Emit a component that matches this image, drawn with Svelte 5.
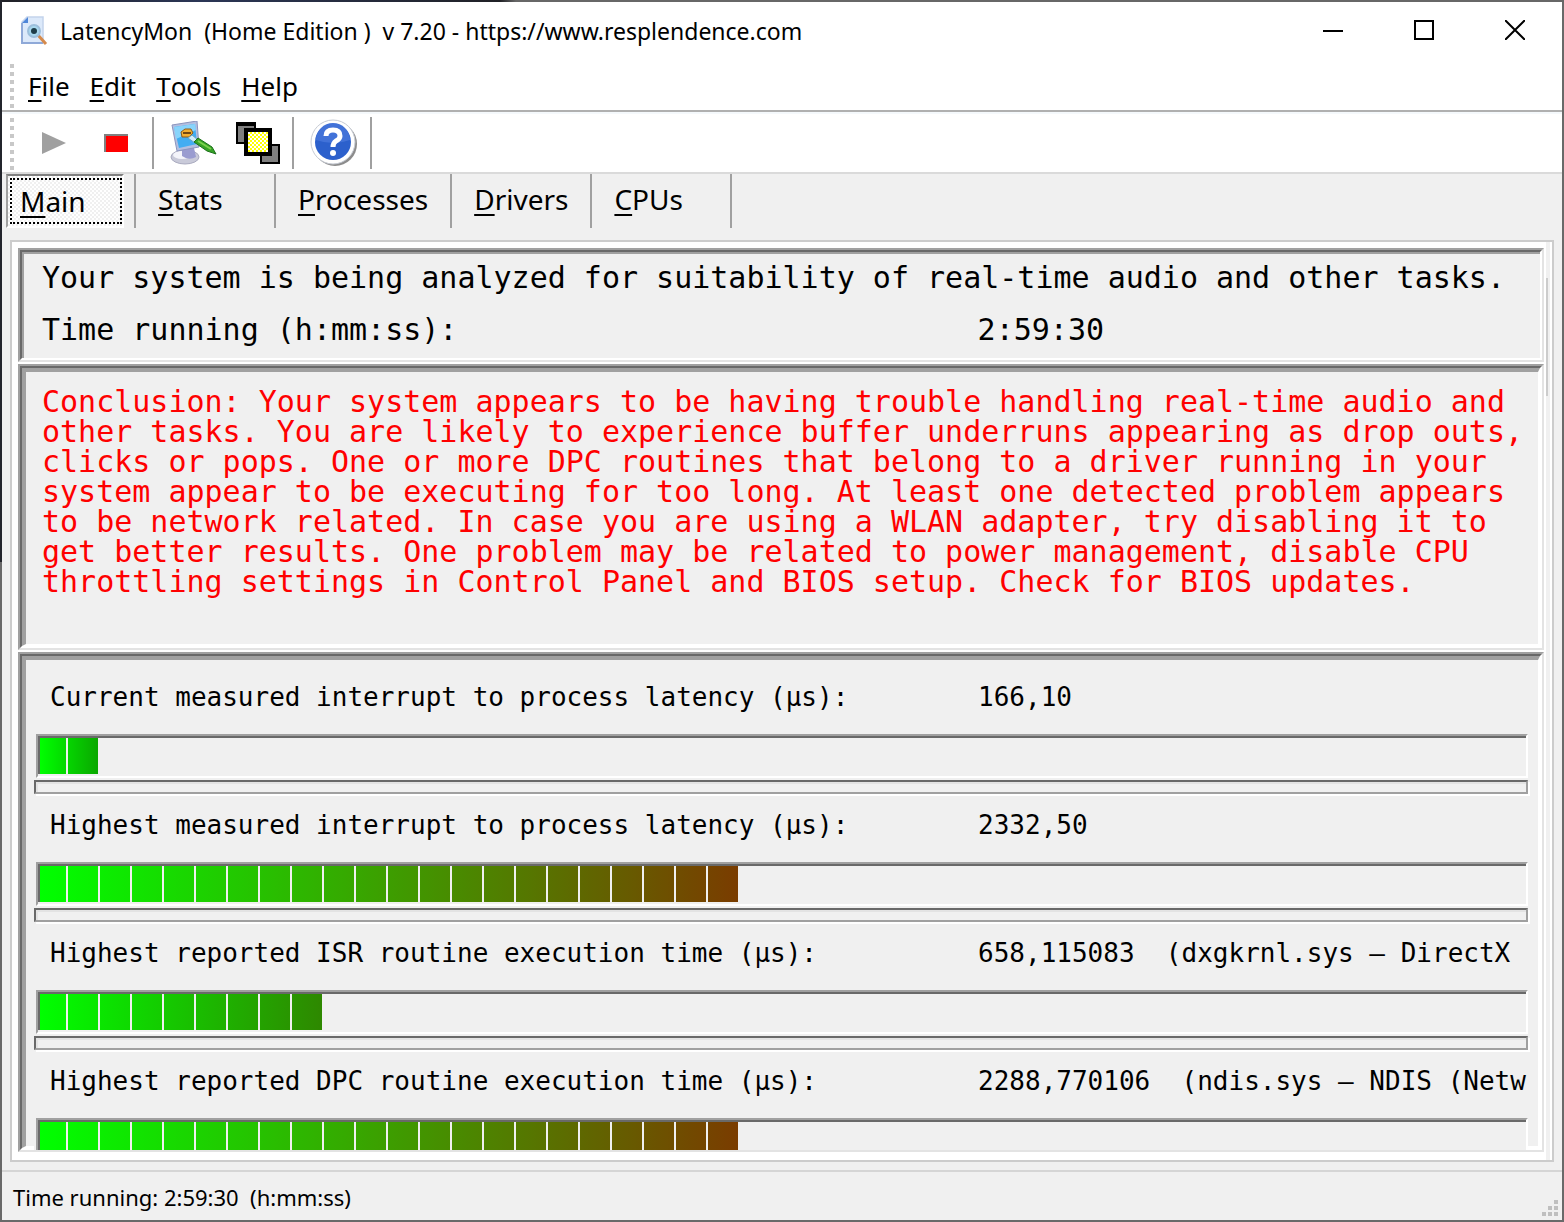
<script>
  const menus = ['File', 'Edit', 'Tools', 'Help'];
  const tabs = ['Main', 'Stats', 'Processes', 'Drivers', 'CPUs'];
  const metrics = [
    { label: 'Current measured interrupt to process latency (µs):', value: '166,10', steps: 2, end: '#0aa800' },
    { label: 'Highest measured interrupt to process latency (µs):', value: '2332,50', steps: 22, end: '#7a3c00' },
    { label: 'Highest reported ISR routine execution time (µs):', value: '658,115083  (dxgkrnl.sys – DirectX', steps: 9, end: '#2e8800' },
    { label: 'Highest reported DPC routine execution time (µs):', value: '2288,770106  (ndis.sys – NDIS (Netw', steps: 22, end: '#7a3c00' }
  ];
  let active = $state('Main');
</script>

<div class="window">
  <div class="frame">
    <header class="title">
      <svg class="appicon" viewBox="0 0 28 32" aria-hidden="true">
        <path d="M7 2H23V28H2V7Z" fill="#dce9fa" stroke="#c3d3ec" stroke-width="1.5" />
        <path d="M2 8L8 2V8Z" fill="#4f86d8" />
        <path d="M2 8V28H23" fill="none" stroke="#8fa9d8" stroke-width="2" />
        <path d="M17 19L26 29" stroke="#d58a4c" stroke-width="3" />
        <circle cx="14" cy="16" r="6" fill="#a8d8ee" stroke="#9dbfdc" stroke-width="2" />
        <circle cx="14" cy="16" r="3" fill="#1f3d4a" />
      </svg>
      <h1>LatencyMon&nbsp; (Home Edition )&nbsp; v 7.20 - https://www.resplendence.com</h1>
      <div class="controls">
        <button aria-label="Minimize"><svg viewBox="0 0 20 20"><path d="M0 11H20" /></svg></button>
        <button aria-label="Maximize"><svg viewBox="0 0 20 20"><path d="M1 1H19V19H1Z" /></svg></button>
        <button aria-label="Close"><svg viewBox="0 0 20 20"><path d="M0 0L20 20M20 0L0 20" /></svg></button>
      </div>
    </header>

    <nav class="menu">
      {#each menus as m}
        <button><u>{m[0]}</u>{m.slice(1)}</button>
      {/each}
    </nav>

    <div class="toolbar">
      <button aria-label="Start" class="play"><svg width="24" height="22" viewBox="0 0 24 22"><path d="M0 0L24 11L0 22Z" fill="#a0a0a0" /></svg></button>
      <button aria-label="Stop" class="stop"><svg width="24" height="18" viewBox="0 0 24 18"><path d="M0 0H24V18H0Z" fill="#808080" /><path d="M2 2H24V18H2Z" fill="#f00" /></svg></button>
      <span class="sep"></span>
      <button aria-label="Options" class="monitor">
        <svg width="48" height="44" viewBox="0 0 48 44">
          <ellipse cx="15" cy="36" rx="14" ry="7" fill="#c9cad9" stroke="#a9aabf" />
          <ellipse cx="12" cy="34" rx="9" ry="4" fill="#f4f4fa" />
          <path d="M12 27L24 27L26 36Q19 40 12 35Z" fill="#9a9cd0" />
          <path d="M2 4L27 0L29 26L7 30Z" fill="#b3bfe0" stroke="#8b94bd" />
          <path d="M4 6L25 3L27 23L9 27Z" fill="#42adf2" />
          <path d="M4 6L25 3L26 9L6 18Z" fill="#88d4fb" />
          <path d="M11 11L15 8H21L23 12L19 16H12Z" fill="#f1ae32" stroke="#8a5a1c" />
          <path d="M13 12H21" stroke="#704714" stroke-width="2" />
          <path d="M18 17L22 14L28 19L25 22Z" fill="#d3edf8" stroke="#6ba6c4" />
          <path d="M24 21L28 17L42 26L46 33L37 30Z" fill="#36a326" stroke="#1d701b" />
          <path d="M28 20L41 28" stroke="#7cd04e" stroke-width="2" />
        </svg>
      </button>
      <button aria-label="Windows" class="layers">
        <svg width="44" height="42" viewBox="0 0 44 42" shape-rendering="crispEdges">
          <path d="M1 1H19V21H1ZM25 23H43V41H25Z" fill="#808080" stroke="#000" stroke-width="2" />
          <path d="M0 0H20V4H0Z" fill="#000" />
          <path d="M10 8H34V32H10Z" fill="#ff0" />
          {#each Array(25) as _, i}
            <path d="M{12 + (i % 5) * 4} {10 + Math.floor(i / 5) * 4}h2v2h-2zM{14 + (i % 5) * 4} {12 + Math.floor(i / 5) * 4}h2v2h-2z" fill="#fff" />
          {/each}
          <path d="M10 8H34V32H10Z" fill="none" stroke="#000" stroke-width="4" />
        </svg>
      </button>
      <span class="sep"></span>
      <button aria-label="Help" class="help">
        <svg width="48" height="48" viewBox="0 0 48 48">
          <circle cx="25" cy="25" r="22" fill="#8c8c8c" />
          <circle cx="23" cy="23" r="22" fill="#fff" stroke="#c6cbd4" />
          <circle cx="23" cy="23" r="18" fill="#2c60cc" />
          <path d="M6 21A17 17 0 0 1 40 21Q23 27 6 21Z" fill="#4272d8" />
          <path d="M16 17Q16 11 23 11Q30 11 30 17Q30 20 26 22Q23 24 23 28" fill="none" stroke="#fff" stroke-width="5" />
          <circle cx="23" cy="34" r="3" fill="#fff" />
        </svg>
      </button>
      <span class="sep"></span>
    </div>

    <div class="tabs" role="tablist">
      {#each tabs as t}
        <button role="tab" aria-selected={active === t} class:active={active === t} onclick={() => (active = t)}><u>{t[0]}</u>{t.slice(1)}</button>
      {/each}
    </div>

    <main>
      <div class="page">
        <section class="panel summary">
          <p>Your system is being analyzed for suitability of real-time audio and other tasks.</p>
          <p class="pair"><span>Time running (h:mm:ss):</span><span>2:59:30</span></p>
        </section>

        <section class="panel deep conclusion">
          <p>Conclusion: Your system appears to be having trouble handling real-time audio and other tasks. You are likely to experience buffer underruns appearing as drop outs, clicks or pops. One or more DPC routines that belong to a driver running in your system appear to be executing for too long. At least one detected problem appears to be network related. In case you are using a WLAN adapter, try disabling it to get better results. One problem may be related to power management, disable CPU throttling settings in Control Panel and BIOS setup. Check for BIOS updates.</p>
        </section>

        <section class="panel deep metrics">
          {#each metrics as m}
            <div class="metric">
              <p class="pair"><span>{m.label}</span><span>{m.value}</span></p>
              <div class="bar" role="meter" aria-label={m.label} aria-valuemin="0" aria-valuemax="46" aria-valuenow={m.steps}>
                <div class="fill" style="width: {m.steps * 32 - 6}px; --end: {m.end}"></div>
              </div>
              <div class="slot"></div>
            </div>
          {/each}
        </section>
      </div>
    </main>

    <footer>
      <span>Time running: 2:59:30&nbsp; (h:mm:ss)</span>
      <svg width="16" height="16" viewBox="0 0 16 16" aria-hidden="true" shape-rendering="crispEdges">
        <path d="M12 0h4v4h-4zM6 6h4v4h-4zM12 6h4v4h-4zM0 12h4v4h-4zM6 12h4v4h-4zM12 12h4v4h-4z" fill="#bfbfbf" />
      </svg>
    </footer>
  </div>
</div>

<style>
  :global(body) { margin: 0; }
  * { box-sizing: border-box; }
  .window {
    height: 100vh;
    padding: 2px;
    font-family: "Noto Sans", "Open Sans", sans-serif;
    color: #000;
    background:
      linear-gradient(#23252c, #23252c) 0 0 / 2px 46% no-repeat,
      linear-gradient(90deg, #202126, #2b3656 200px, #202126 500px, #676767 516px) 0 0 / 100% 2px no-repeat,
      #696969;
  }
  .frame { height: 100%; display: flex; flex-direction: column; background: #f0f0f0; overflow: hidden; }
  button { border: 0; padding: 0; margin: 0; background: none; color: inherit; font: inherit; display: flex; align-items: center; }
  h1, p { margin: 0; font-weight: 400; }
  u { text-decoration-thickness: 2px; text-underline-offset: 4px; text-decoration-skip-ink: none; }

  .title { height: 58px; flex: none; display: flex; align-items: center; padding: 0 2px 0 18px; background: #fff; }
  .appicon { width: 28px; height: 32px; margin-right: 12px; }
  .title h1 { font-size: 23px; flex: 1; white-space: nowrap; }
  .controls { display: flex; height: 100%; }
  .controls button { width: 91px; padding-bottom: 2px; justify-content: center; }
  .controls svg { width: 20px; height: 20px; fill: none; stroke: #000; stroke-width: 2; }

  .menu, .toolbar { position: relative; flex: none; display: flex; background: #fff; }
  .menu::before, .toolbar::before {
    content: ""; position: absolute; left: 8px; top: 4px; bottom: 0; width: 4px;
    background: repeating-linear-gradient(#c8c8c8 0 4px, transparent 4px 8px);
  }
  .menu { height: 52px; padding-left: 26px; padding-top: 2px; gap: 20px; border-bottom: 2px solid #b0b0b0; font-size: 26px; }
  .toolbar { height: 62px; align-items: center; border-bottom: 2px solid #dadada; border-top: 2px solid #f5f9fc; }
  .toolbar .sep { width: 2px; height: 52px; background: #a0a0a0; }
  .play { margin-left: 40px; }
  .stop { margin-left: 38px; margin-right: 24px; }
  .monitor { margin-left: 16px; }
  .layers { margin-left: 18px; margin-right: 12px; }
  .help { margin-left: 16px; margin-right: 12px; }

  .tabs { flex: none; display: flex; height: 54px; font-size: 28px; }
  .tabs button { min-width: 140px; height: 54px; padding: 0 22px 4px 22px; border-right: 2px solid #a0a0a0; }
  .tabs button:first-child { min-width: 134px; padding-left: 18px; }
  .tabs .active { position: relative; z-index: 0; padding-bottom: 0; }
  .tabs .active::before {
    content: ""; position: absolute; z-index: -1; inset: 0 10px 0 4px;
    border: 2px solid; border-color: #808080 #fff #fff #a0a0a0;
    background: repeating-conic-gradient(#fff 0 25%, #f0f0f0 0 50%) 0 0 / 4px 4px;
  }
  .tabs .active::after { content: ""; position: absolute; inset: 4px 12px 4px 8px; border: 2px dotted #000; }

  main { flex: 1; min-height: 0; padding: 12px 8px 8px; border-bottom: 2px solid #d5d5d5; }
  .page {
    height: 100%; display: flex; flex-direction: column; gap: 2px;
    padding: 6px 8px 8px 6px; border: 2px solid #ccc;
    background:
      linear-gradient(#ccc, #ccc) right 4px top 36px / 2px 118px no-repeat,
      linear-gradient(#f0f0f0, #f0f0f0) right 2px center / 4px 100% no-repeat,
      #fff;
    font-family: "DejaVu Sans Mono", "Liberation Mono", monospace;
  }
  .panel {
    flex: none; background: #f0f0f0; overflow: hidden; border: 2px solid; border-color: #a0a0a0 #e3e3e3 #e3e3e3 #a0a0a0;
    position: relative;
  }
  .panel::before {
    content: ""; position: absolute; inset: 0; border: 2px solid; border-color: #696969 #fff #fff #696969; pointer-events: none;
  }
  .panel::after {
    content: ""; position: absolute; inset: 2px; border: solid #a0a0a0; border-width: 2px 0 0 2px; pointer-events: none;
  }
  .deep::after { border-width: 4px 2px 2px 4px; border-color: #a0a0a0 #fff #fff #a0a0a0; }
  .pair { display: grid; grid-template-columns: minmax(0, 27fr) minmax(0, 16fr); white-space: pre; }
  .pair span { overflow: hidden; }
  .summary { height: 114px; padding: 2px 10px 0 22px; font-size: 30px; line-height: 52px; white-space: nowrap; }
  .conclusion { height: 286px; padding: 21px 8px 0 22px; font-size: 30px; line-height: 30px; color: #f00; }
  .metrics { flex: 1; min-height: 0; padding: 14px 14px 0 14px; font-size: 26px; }
  .metric { position: relative; z-index: 1; background: #f0f0f0; }
  .metric .pair { height: 66px; line-height: 58px; padding-left: 16px; }
  .bar { height: 44px; margin: 0 0 2px 2px; border: 2px solid; border-color: #a0a0a0 #fff #fff #a0a0a0; }
  .bar::before { content: ""; display: block; height: 2px; background: #696969; }
  .fill {
    box-sizing: content-box; height: 36px; border-left: 2px solid #696969;
    background:
      linear-gradient(90deg, transparent 30px, #f0f0f0 30px) -4px 0 / 32px 100%,
      linear-gradient(90deg, #0f0, var(--end));
    background-origin: padding-box; background-clip: padding-box;
  }
  .slot { height: 14px; margin-bottom: 2px; border: 2px solid; border-color: #696969 #a0a0a0 #a0a0a0 #696969; box-shadow: 2px 2px #fff, inset 2px 2px #e3e3e3; }

  footer { flex: none; height: 48px; display: flex; align-items: center; justify-content: space-between; padding: 2px 4px 0 11px; font-size: 22px; }
  footer svg { align-self: flex-end; margin-bottom: 4px; }
</style>
